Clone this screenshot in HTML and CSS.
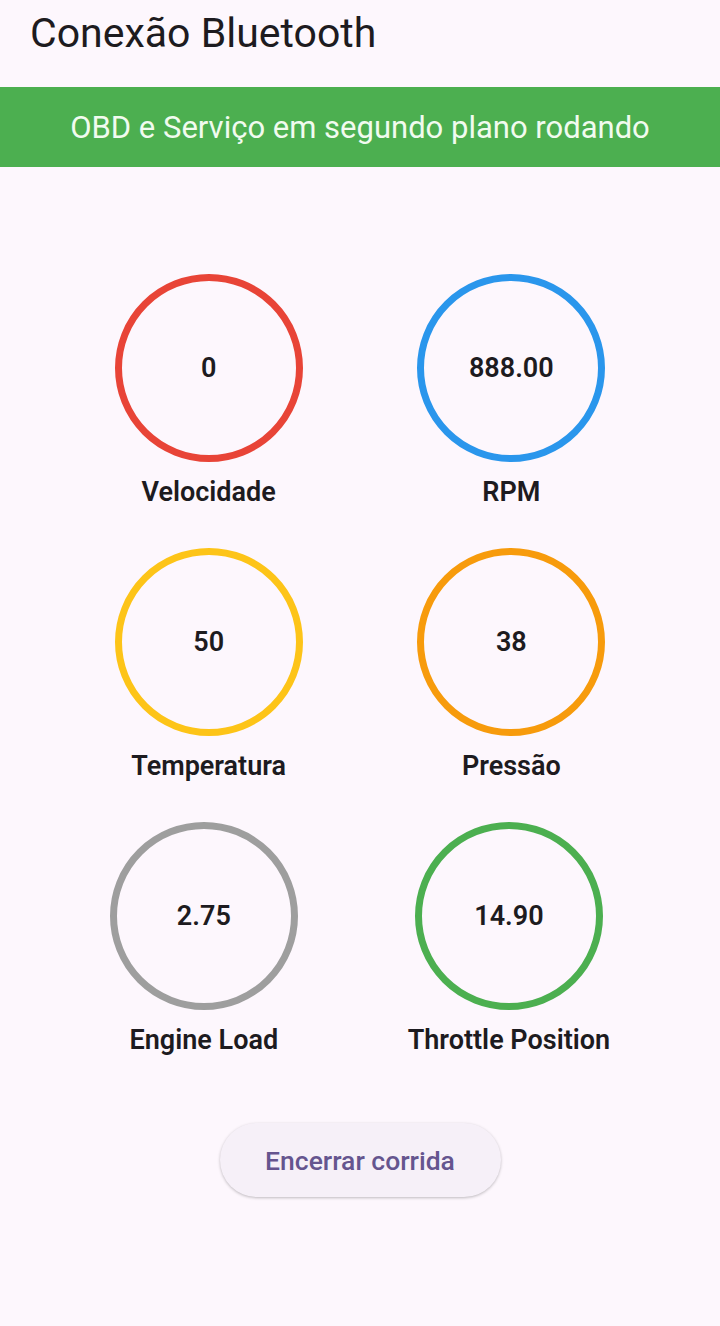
FILE: index.html
```html
<!DOCTYPE html>
<html lang="pt">
<head>
<meta charset="utf-8">
<title>Conexão Bluetooth</title>
<link rel="stylesheet" href="styles.css">
</head>
<body>
<header class="appbar"><h1 class="title">Conexão Bluetooth</h1></header>
<div class="banner">OBD e Serviço em segundo plano rodando</div>
<main class="content">
  <div class="row">
    <div class="gauge"><div class="ring red">0</div><div class="label">Velocidade</div></div>
    <div class="gauge"><div class="ring blue">888.00</div><div class="label">RPM</div></div>
  </div>
  <div class="row">
    <div class="gauge"><div class="ring yellow">50</div><div class="label">Temperatura</div></div>
    <div class="gauge"><div class="ring orange">38</div><div class="label">Pressão</div></div>
  </div>
  <div class="row">
    <div class="gauge"><div class="ring grey">2.75</div><div class="label">Engine Load</div></div>
    <div class="gauge"><div class="ring green">14.90</div><div class="label">Throttle Position</div></div>
  </div>
  <div class="actions"><button class="btn">Encerrar corrida</button></div>
</main>
</body>
</html>
```
FILE: styles.css
```css
html, body { margin: 0; padding: 0; }
body {
  background: #fdf7fd;
  font-family: Roboto, "Noto Sans", sans-serif;
  color: #1d1b20;
  width: 720px;
  min-height: 1326px;
}
.appbar { height: 87px; display: flex; align-items: center; padding: 0 30px; box-sizing: border-box; }
.title { margin: 0; font-weight: 400; font-size: 41px; line-height: 1; padding-bottom: 20px; }
.banner {
  background: #4caf50;
  color: #f1fbef;
  height: 80px;
  display: flex; align-items: center; justify-content: center;
  font-size: 31px;
}
.content { padding-top: 107px; }
.row { display: flex; justify-content: space-evenly; margin-bottom: 40px; }
.gauge { display: flex; flex-direction: column; align-items: center; }
.ring {
  width: 188px; height: 188px; box-sizing: border-box;
  border: 7px solid; border-radius: 50%;
  display: flex; align-items: center; justify-content: center;
  font-size: 27px; font-weight: 600;
}
.red { border-color: #e84437; }
.blue { border-color: #2a96ec; }
.yellow { border-color: #fdc418; }
.orange { border-color: #f79b0c; }
.grey { border-color: #9e9e9e; }
.green { border-color: #4caf50; }
.label { margin-top: 14px; font-size: 27px; font-weight: 600; line-height: 32px; }
.actions { display: flex; justify-content: center; margin-top: 67px; }
.btn {
  font-family: inherit;
  width: 281px; height: 74px; border: none; border-radius: 37px;
  background: #f6f0f8; color: #65558f;
  font-size: 26.5px; font-weight: 500;
  box-shadow: 0 1px 3px rgba(0,0,0,0.25);
}
```
